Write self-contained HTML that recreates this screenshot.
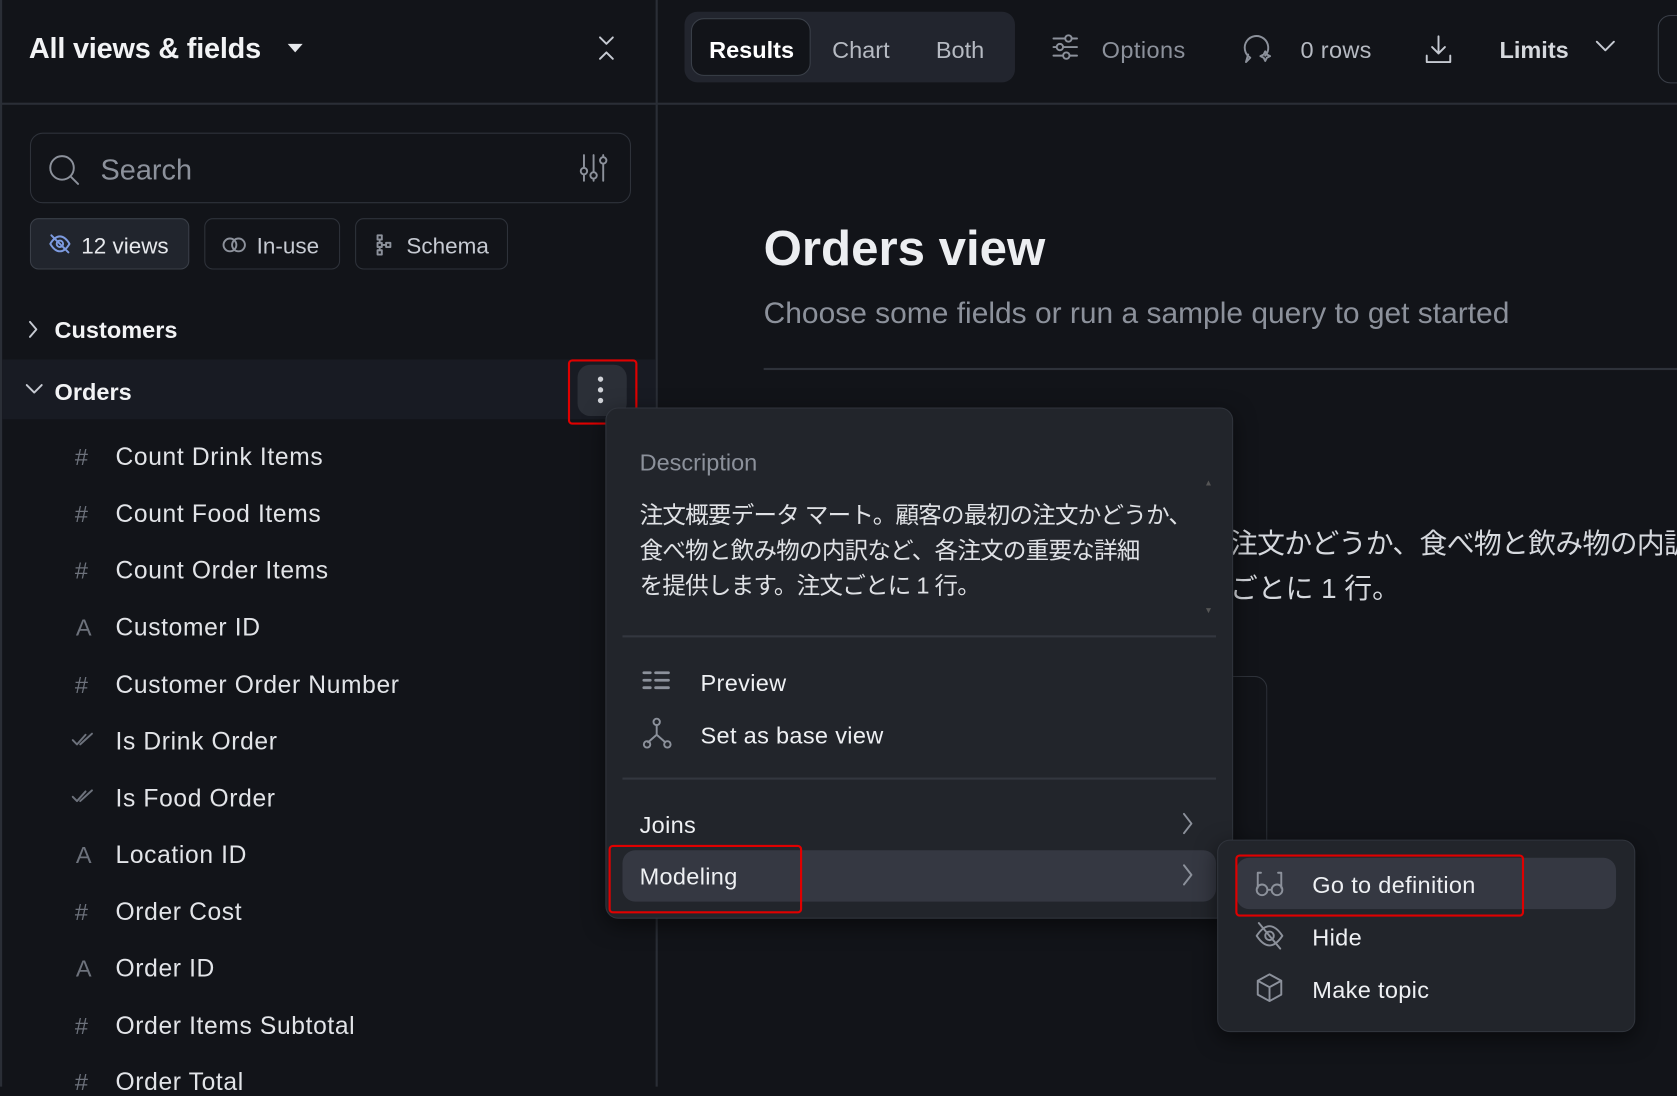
<!DOCTYPE html>
<html><head><meta charset="utf-8"><style>
html,body{margin:0;padding:0;background:#121419;overflow:hidden;width:1677px;height:1087px}
#w{position:absolute;left:0;top:0;width:1568px;height:1016px;transform:scale(1.06952);transform-origin:0 0;font-family:"Liberation Sans","Noto Sans CJK JP",sans-serif;color:#e6e8ec}
.a{position:absolute;white-space:nowrap}
svg{position:absolute;fill:none;stroke:#8c919b;stroke-width:1.8;stroke-linecap:round;stroke-linejoin:round}
.f{font-size:23px;letter-spacing:0.6px;color:#e2e4e8;margin-top:1px}
.ic{font-size:22px;color:#6d727c;margin-top:1px}
.chip{position:absolute;top:204px;height:48px;border:1.5px solid #2e323a;border-radius:8px;box-sizing:border-box;font-size:21px;color:#c6cad2}
.mi{font-size:22px;letter-spacing:0.3px;color:#eef0f3;margin-top:2px}
</style></head><body><div id="w">
<!-- sidebar -->
<div class="a" style="left:0;top:0;width:2px;height:1016px;background:#2a2e36"></div>
<div class="a" style="left:613px;top:0;width:2px;height:1016px;background:#2a2e36"></div>
<div class="a" style="left:0;top:96px;width:1568px;height:2px;background:#2a2e36"></div>
<div class="a" style="left:27px;top:30px;font-size:27px;font-weight:bold;color:#f2f3f5;letter-spacing:-0.2px">All views &amp; fields</div>
<svg style="left:266px;top:38px" width="20" height="14"><path d="M3 3h14l-7 8z" fill="#e6e8ec" stroke="none"/></svg>
<svg style="left:557px;top:32px" width="20" height="26"><path d="M4 3l6 6 6-6M4 23l6-6 6 6" stroke="#c6cad2"/></svg>
<div class="a" style="left:28px;top:124px;width:562px;height:66px;border:1.5px solid #2e323a;border-radius:12px;box-sizing:border-box"></div>
<svg style="left:44px;top:143px" width="32" height="32"><circle cx="14" cy="14" r="11"/><path d="M22 22l7 7"/></svg>
<div class="a" style="left:94px;top:144px;font-size:27px;color:#8c919b">Search</div>
<svg style="left:540px;top:142px" width="30" height="30"><path d="M6 3v24M15 3v24M24 3v24"/><circle cx="6" cy="18" r="3" fill="#121419"/><circle cx="15" cy="22" r="3" fill="#121419"/><circle cx="24" cy="8" r="3" fill="#121419"/></svg>
<div class="chip" style="left:28px;width:149px;background:#21252d;border-color:#3a3f48"></div>
<svg style="left:45px;top:218px" width="22" height="20"><path d="M2 10c3-5 6-7 9-7s6 2 9 7c-3 5-6 7-9 7s-6-2-9-7z" stroke="#7d9be0"/><circle cx="11" cy="10" r="3" stroke="#7d9be0"/><path d="M3 2l16 16" stroke="#7d9be0"/></svg>
<div class="a" style="left:76px;top:219px;font-size:21px;color:#e6e8ec">12 views</div>
<div class="chip" style="left:191px;width:127px"></div>
<svg style="left:207px;top:220px" width="26" height="18"><circle cx="8" cy="9" r="6"/><circle cx="16" cy="9" r="6"/></svg>
<div class="a" style="left:240px;top:219px;font-size:21px;color:#c6cad2">In-use</div>
<div class="chip" style="left:332px;width:143px"></div>
<svg style="left:350px;top:218px" width="20" height="22"><rect x="3" y="2" width="4" height="4"/><rect x="3" y="9" width="4" height="4"/><rect x="3" y="16" width="4" height="4"/><rect x="11" y="9" width="4" height="4"/><path d="M5 6v3M5 13v3M7 11h4"/></svg>
<div class="a" style="left:380px;top:219px;font-size:21px;color:#c6cad2">Schema</div>
<svg style="left:24px;top:298px" width="14" height="20"><path d="M4 3l6 7-6 7" stroke="#c6cad2"/></svg>
<div class="a" style="left:51px;top:296px;font-size:22px;font-weight:bold;color:#f2f3f5">Customers</div>
<div class="a" style="left:2px;top:336px;width:611px;height:56px;background:#181b23"></div>
<svg style="left:22px;top:356px" width="20" height="14"><path d="M3 4l7 7 7-7" stroke="#c6cad2"/></svg>
<div class="a" style="left:51px;top:354px;font-size:22px;font-weight:bold;color:#f2f3f5">Orders</div>
<div class="a" style="left:540px;top:341px;width:46px;height:48px;background:#2b2f37;border-radius:12px"></div>
<div class="a" style="left:559px;top:352px;width:5px;height:5px;border-radius:3px;background:#d0d3d8"></div>
<div class="a" style="left:559px;top:362px;width:5px;height:5px;border-radius:3px;background:#d0d3d8"></div>
<div class="a" style="left:559px;top:372px;width:5px;height:5px;border-radius:3px;background:#d0d3d8"></div>
<div class="a" style="left:531px;top:336px;width:65px;height:61px;border:2px solid #e00000;border-radius:4px;box-sizing:border-box"></div>

<div class="a ic" style="left:70px;top:414px">#</div><div class="a f" style="left:108px;top:413px">Count Drink Items</div>
<div class="a ic" style="left:70px;top:467px">#</div><div class="a f" style="left:108px;top:466px">Count Food Items</div>
<div class="a ic" style="left:70px;top:520px">#</div><div class="a f" style="left:108px;top:519px">Count Order Items</div>
<div class="a ic" style="left:71px;top:573px">A</div><div class="a f" style="left:108px;top:572px">Customer ID</div>
<div class="a ic" style="left:70px;top:627px">#</div><div class="a f" style="left:108px;top:626px">Customer Order Number</div>
<svg style="left:66px;top:684px" width="26" height="16"><path d="M2 8l4 4 8-9M9 12l11-10" stroke="#6d727c"/></svg><div class="a f" style="left:108px;top:679px">Is Drink Order</div>
<svg style="left:66px;top:737px" width="26" height="16"><path d="M2 8l4 4 8-9M9 12l11-10" stroke="#6d727c"/></svg><div class="a f" style="left:108px;top:732px">Is Food Order</div>
<div class="a ic" style="left:71px;top:786px">A</div><div class="a f" style="left:108px;top:785px">Location ID</div>
<div class="a ic" style="left:70px;top:839px">#</div><div class="a f" style="left:108px;top:838px">Order Cost</div>
<div class="a ic" style="left:71px;top:892px">A</div><div class="a f" style="left:108px;top:891px">Order ID</div>
<div class="a ic" style="left:70px;top:946px">#</div><div class="a f" style="left:108px;top:945px">Order Items Subtotal</div>
<div class="a ic" style="left:70px;top:998px">#</div><div class="a f" style="left:108px;top:997px">Order Total</div>

<!-- top bar -->
<div class="a" style="left:640px;top:11px;width:309px;height:66px;background:#22252e;border-radius:12px"></div>
<div class="a" style="left:646px;top:17px;width:112px;height:54px;background:#121419;border:1.5px solid #3a3f48;border-radius:12px;box-sizing:border-box"></div>
<div class="a" style="left:663px;top:34px;font-size:22px;font-weight:bold;color:#fff">Results</div>
<div class="a" style="left:778px;top:34px;font-size:22px;color:#b6bac2">Chart</div>
<div class="a" style="left:875px;top:34px;font-size:22px;color:#b6bac2">Both</div>
<svg style="left:982px;top:30px" width="28" height="30"><path d="M3 6h22M3 14h22M3 22h22"/><circle cx="17" cy="6" r="3" fill="#121419"/><circle cx="9" cy="14" r="3" fill="#121419"/><circle cx="15" cy="22" r="3" fill="#121419"/></svg>
<div class="a" style="left:1030px;top:34px;font-size:22px;color:#8c919b;letter-spacing:0.4px">Options</div>
<svg style="left:1160px;top:30px" width="32" height="32"><path d="M9 24a11 11 0 1 1 14-2M9 24l-4 4 2-7"/><path d="M23 18l1.5 3 3 1.5-3 1.5-1.5 3-1.5-3-3-1.5 3-1.5z"/></svg>
<div class="a" style="left:1216px;top:34px;font-size:22px;color:#b6bac2;letter-spacing:0.3px">0 rows</div>
<svg style="left:1330px;top:30px" width="32" height="32"><path d="M15 4v16M9 14l6 6 6-6M4 22v6h22v-6" stroke="#c6cad2"/></svg>
<div class="a" style="left:1402px;top:34px;font-size:22px;font-weight:bold;color:#d6d9de">Limits</div>
<svg style="left:1490px;top:36px" width="22" height="16"><path d="M3 3l8 8 8-8" stroke="#c6cad2"/></svg>
<div class="a" style="left:1550px;top:14px;width:40px;height:62px;border:1.5px solid #3a3f48;border-radius:12px"></div>

<!-- main -->
<div class="a" style="left:714px;top:205px;font-size:46px;font-weight:bold;color:#eceef1">Orders view</div>
<div class="a" style="left:714px;top:277px;font-size:28px;color:#8c919b">Choose some fields or run a sample query to get started</div>
<div class="a" style="left:714px;top:344px;width:854px;height:2px;background:#2e323a"></div>
<div class="a" style="left:1150px;top:488px;font-size:26px;color:#d6d9de;letter-spacing:-0.6px">注文かどうか、食べ物と飲み物の内訳</div>
<div class="a" style="left:1150px;top:530px;font-size:26px;color:#d6d9de">ごとに 1 行。</div>
<div class="a" style="left:1140px;top:632px;width:44px;height:160px;border:1.5px solid #2e323a;border-left:none;border-bottom:none;border-radius:0 12px 0 0"></div>

<!-- menu -->
<div class="a" style="left:566px;top:381px;width:587px;height:478px;background:#22252b;border:1.5px solid #30343c;border-radius:12px;box-sizing:border-box;box-shadow:0 6px 20px rgba(0,0,0,.5)"></div>
<div class="a" style="left:598px;top:420px;font-size:22px;color:#8c919b">Description</div>
<div class="a" style="left:598px;top:465px;font-size:22px;line-height:33px;color:#dfe1e5;letter-spacing:-0.7px">注文概要データ マート。顧客の最初の注文かどうか、<br>食べ物と飲み物の内訳など、各注文の重要な詳細<br>を提供します。注文ごとに 1 行。</div>
<div class="a" style="left:1126px;top:447px;font-size:8px;color:#555">▲</div>
<div class="a" style="left:1126px;top:566px;font-size:8px;color:#555">▼</div>
<div class="a" style="left:582px;top:594px;width:555px;height:2px;background:#33373f"></div>
<svg style="left:600px;top:626px" width="30" height="24"><path d="M2 3h6M2 10h6M2 17h6M13 3h12M13 10h12M13 17h12" stroke-width="2.6" stroke="#8c919b"/></svg>
<div class="a mi" style="left:655px;top:624px">Preview</div>
<svg style="left:600px;top:670px" width="30" height="32"><circle cx="14" cy="5" r="3"/><circle cx="5" cy="26" r="3"/><circle cx="24" cy="26" r="3"/><path d="M14 8v9l-8 7M14 17l8 7"/></svg>
<div class="a mi" style="left:655px;top:673px">Set as base view</div>
<div class="a" style="left:582px;top:727px;width:555px;height:2px;background:#33373f"></div>
<div class="a mi" style="left:598px;top:757px">Joins</div>
<svg style="left:1104px;top:758px" width="14" height="24"><path d="M3 3l7 9-7 9"/></svg>
<div class="a" style="left:582px;top:795px;width:555px;height:48px;background:#353842;border-radius:12px"></div>
<div class="a mi" style="left:598px;top:805px">Modeling</div>
<svg style="left:1104px;top:806px" width="14" height="24"><path d="M3 3l7 9-7 9"/></svg>
<div class="a" style="left:569px;top:790px;width:181px;height:64px;border:2px solid #e00000;border-radius:4px;box-sizing:border-box"></div>

<!-- submenu -->
<div class="a" style="left:1138px;top:785px;width:391px;height:180px;background:#22252b;border:1.5px solid #30343c;border-radius:12px;box-sizing:border-box;box-shadow:0 6px 20px rgba(0,0,0,.5)"></div>
<div class="a" style="left:1156px;top:802px;width:355px;height:48px;background:#353842;border-radius:12px"></div>
<svg style="left:1172px;top:812px" width="30" height="28"><path d="M4 18V4h3M26 18V4h-3"/><circle cx="8" cy="20" r="5"/><circle cx="22" cy="20" r="5"/><path d="M13 20h4"/></svg>
<div class="a mi" style="left:1227px;top:813px">Go to definition</div>
<div class="a" style="left:1155px;top:799px;width:270px;height:58px;border:2px solid #e00000;border-radius:4px;box-sizing:border-box"></div>
<svg style="left:1172px;top:860px" width="30" height="30"><path d="M3 15c4-6 8-9 12-9s8 3 12 9c-4 6-8 9-12 9s-8-3-12-9z"/><circle cx="15" cy="15" r="4"/><path d="M5 3l20 24"/></svg>
<div class="a mi" style="left:1227px;top:862px">Hide</div>
<svg style="left:1172px;top:908px" width="30" height="32"><path d="M15 3l11 6v13l-11 6-11-6V9zM4 9l11 6 11-6M15 15v13"/></svg>
<div class="a mi" style="left:1227px;top:911px">Make topic</div>
</div></body></html>
